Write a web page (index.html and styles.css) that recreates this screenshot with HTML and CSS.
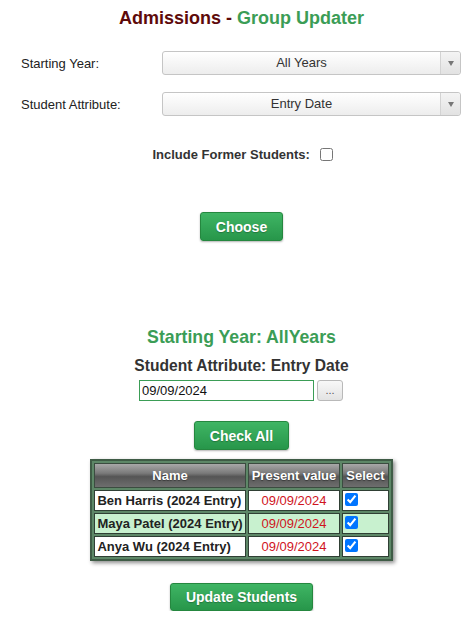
FILE: index.html
```html
<!DOCTYPE html>
<html lang="en">
<head>
  <meta charset="UTF-8">
  <meta name="viewport" content="width=device-width, initial-scale=1.0">
  <title>Admissions - Group Updater</title>
  <link rel="stylesheet" href="styles.css">
</head>
<body>
  <h1 class="title">Admissions - <span class="title-green">Group Updater</span></h1>

  <div class="field-row first">
    <label class="field-label">Starting Year:</label>
    <div class="selectmenu">
      <span class="selectmenu-text">All Years</span>
      <span class="selectmenu-arrow"><span class="tri"></span></span>
    </div>
  </div>
  <div class="field-row">
    <label class="field-label">Student Attribute:</label>
    <div class="selectmenu">
      <span class="selectmenu-text">Entry Date</span>
      <span class="selectmenu-arrow"><span class="tri"></span></span>
    </div>
  </div>

  <div class="include-row">
    <label for="former">Include Former Students:</label>
    <input type="checkbox" id="former">
  </div>

  <div class="center choose-wrap">
    <button class="btn">Choose</button>
  </div>

  <h2 class="result-title">Starting Year: AllYears</h2>
  <h3 class="result-sub">Student Attribute: Entry Date</h3>

  <div class="date-row">
    <input type="text" class="date-input" value="09/09/2024">
    <button class="dots-btn">...</button>
  </div>

  <div class="center checkall-wrap">
    <button class="btn">Check All</button>
  </div>

  <div class="center">
    <table class="students">
      <thead>
        <tr>
          <th>Name</th>
          <th>Present value</th>
          <th>Select</th>
        </tr>
      </thead>
      <tbody>
        <tr>
          <td class="name">Ben Harris (2024 Entry)</td>
          <td class="value">09/09/2024</td>
          <td class="sel"><input type="checkbox" checked></td>
        </tr>
        <tr class="alt">
          <td class="name">Maya Patel (2024 Entry)</td>
          <td class="value">09/09/2024</td>
          <td class="sel"><input type="checkbox" checked></td>
        </tr>
        <tr>
          <td class="name">Anya Wu (2024 Entry)</td>
          <td class="value">09/09/2024</td>
          <td class="sel"><input type="checkbox" checked></td>
        </tr>
      </tbody>
    </table>
  </div>

  <div class="center update-wrap">
    <button class="btn">Update Students</button>
  </div>
</body>
</html>
```

FILE: styles.css
```css
body {
  font-family: "Liberation Sans", Arial, sans-serif;
  font-size: 13px;
  color: #222;
  margin: 0;
  padding: 0 0 0 8px;
  background: #fff;
}
.center {
  text-align: center;
}
.title {
  margin: 0;
  padding-top: 8px;
  font-size: 18px;
  line-height: 20px;
  text-align: center;
  color: #5e0a0a;
}
.title-green {
  color: #3b9d56;
}
.field-row {
  display: grid;
  grid-template-columns: 154px 299px;
  align-items: center;
  margin-top: 17px;
}
.field-row.first {
  margin-top: 23px;
}
.field-label {
  padding-left: 13px;
  color: #222;
}
.selectmenu {
  display: flex;
  height: 22px;
  border: 1px solid #c5c5c5;
  border-radius: 3px;
  background: linear-gradient(#ffffff, #ededed);
  color: #333;
}
.selectmenu-text {
  flex: 1;
  text-align: center;
  line-height: 22px;
}
.selectmenu-arrow {
  width: 19px;
  border-left: 1px solid #d3d3d3;
  background: linear-gradient(#f4f4f4, #e2e2e2);
  display: flex;
  align-items: center;
  justify-content: center;
  border-radius: 0 3px 3px 0;
}
.tri {
  width: 0;
  height: 0;
  border-left: 3px solid transparent;
  border-right: 3px solid transparent;
  border-top: 5px solid #777;
}
.include-row {
  margin-top: 31px;
  text-align: center;
  font-weight: bold;
  color: #333;
  line-height: 16px;
  padding-left: 2px;
}
.include-row input {
  width: 13px;
  height: 13px;
  margin: 0 0 0 6px;
  vertical-align: -2px;
}
.choose-wrap {
  margin-top: 49px;
}
.btn {
  font-family: "Liberation Sans", Arial, sans-serif;
  font-size: 14px;
  font-weight: bold;
  color: #fff;
  height: 29px;
  padding: 0 15px;
  border: 1px solid #25873f;
  border-radius: 3px;
  background: linear-gradient(#3fb564, #27964a);
  box-shadow: 0 1px 2px rgba(0, 0, 0, 0.3);
  text-shadow: 0 1px 1px rgba(0, 0, 0, 0.25);
  cursor: pointer;
}
.result-title {
  margin: 86px 0 0;
  font-size: 17.7px;
  line-height: 20px;
  text-align: center;
  color: #3b9d56;
}
.result-sub {
  margin: 10px 0 0;
  font-size: 15.6px;
  line-height: 18px;
  text-align: center;
  color: #333;
}
.date-row {
  margin-top: 5px;
  display: flex;
  justify-content: center;
  align-items: center;
  gap: 3px;
  padding-right: 1px;
}
.date-input {
  box-sizing: border-box;
  width: 175px;
  height: 21px;
  border: 1px solid #3b9d56;
  padding: 0 2px;
  font-family: "Liberation Sans", Arial, sans-serif;
  font-size: 13px;
  color: #111;
  margin: 0;
}
.dots-btn {
  box-sizing: border-box;
  width: 26px;
  height: 21px;
  padding: 0;
  border: 1px solid #b9b9b9;
  border-radius: 3px;
  background: linear-gradient(#f8f8f8, #e3e3e3);
  color: #555;
  font-size: 11px;
  line-height: 17px;
  margin: 0;
}
.checkall-wrap {
  margin-top: 20px;
}
.students {
  margin: 9px auto 0;
  border: 2px solid #3f5c46;
  border-spacing: 2px;
  background: #5d8767;
  box-shadow: 2px 2px 4px rgba(0, 0, 0, 0.45);
  font-size: 13px;
}
.students th {
  height: 19px;
  padding: 2px 3px;
  color: #fff;
  font-weight: bold;
  border: 1px solid #3b4c40;
  background: linear-gradient(#a8a8a8 0%, #7a7a7a 40%, #555 55%, #6e6e6e 100%);
  text-shadow: 0 1px 1px rgba(0, 0, 0, 0.4);
}
.students td {
  height: 17px;
  padding: 1px 2px;
  border: 1px solid #2f3f34;
  background: #fff;
}
.students tr.alt td {
  background: #c8f1cf;
}
.students td.name {
  font-weight: bold;
  color: #222;
  text-align: left;
}
.students td.value {
  color: #d0141e;
  text-align: center;
  padding: 1px 8px;
}
.students td.sel {
  text-align: left;
  padding: 0 1px;
  vertical-align: top;
}
.students td.sel input {
  width: 13px;
  height: 13px;
  margin: 2px 0 0 1px;
}
.update-wrap {
  margin-top: 22px;
}
.update-wrap .btn {
  height: 28px;
}
```
